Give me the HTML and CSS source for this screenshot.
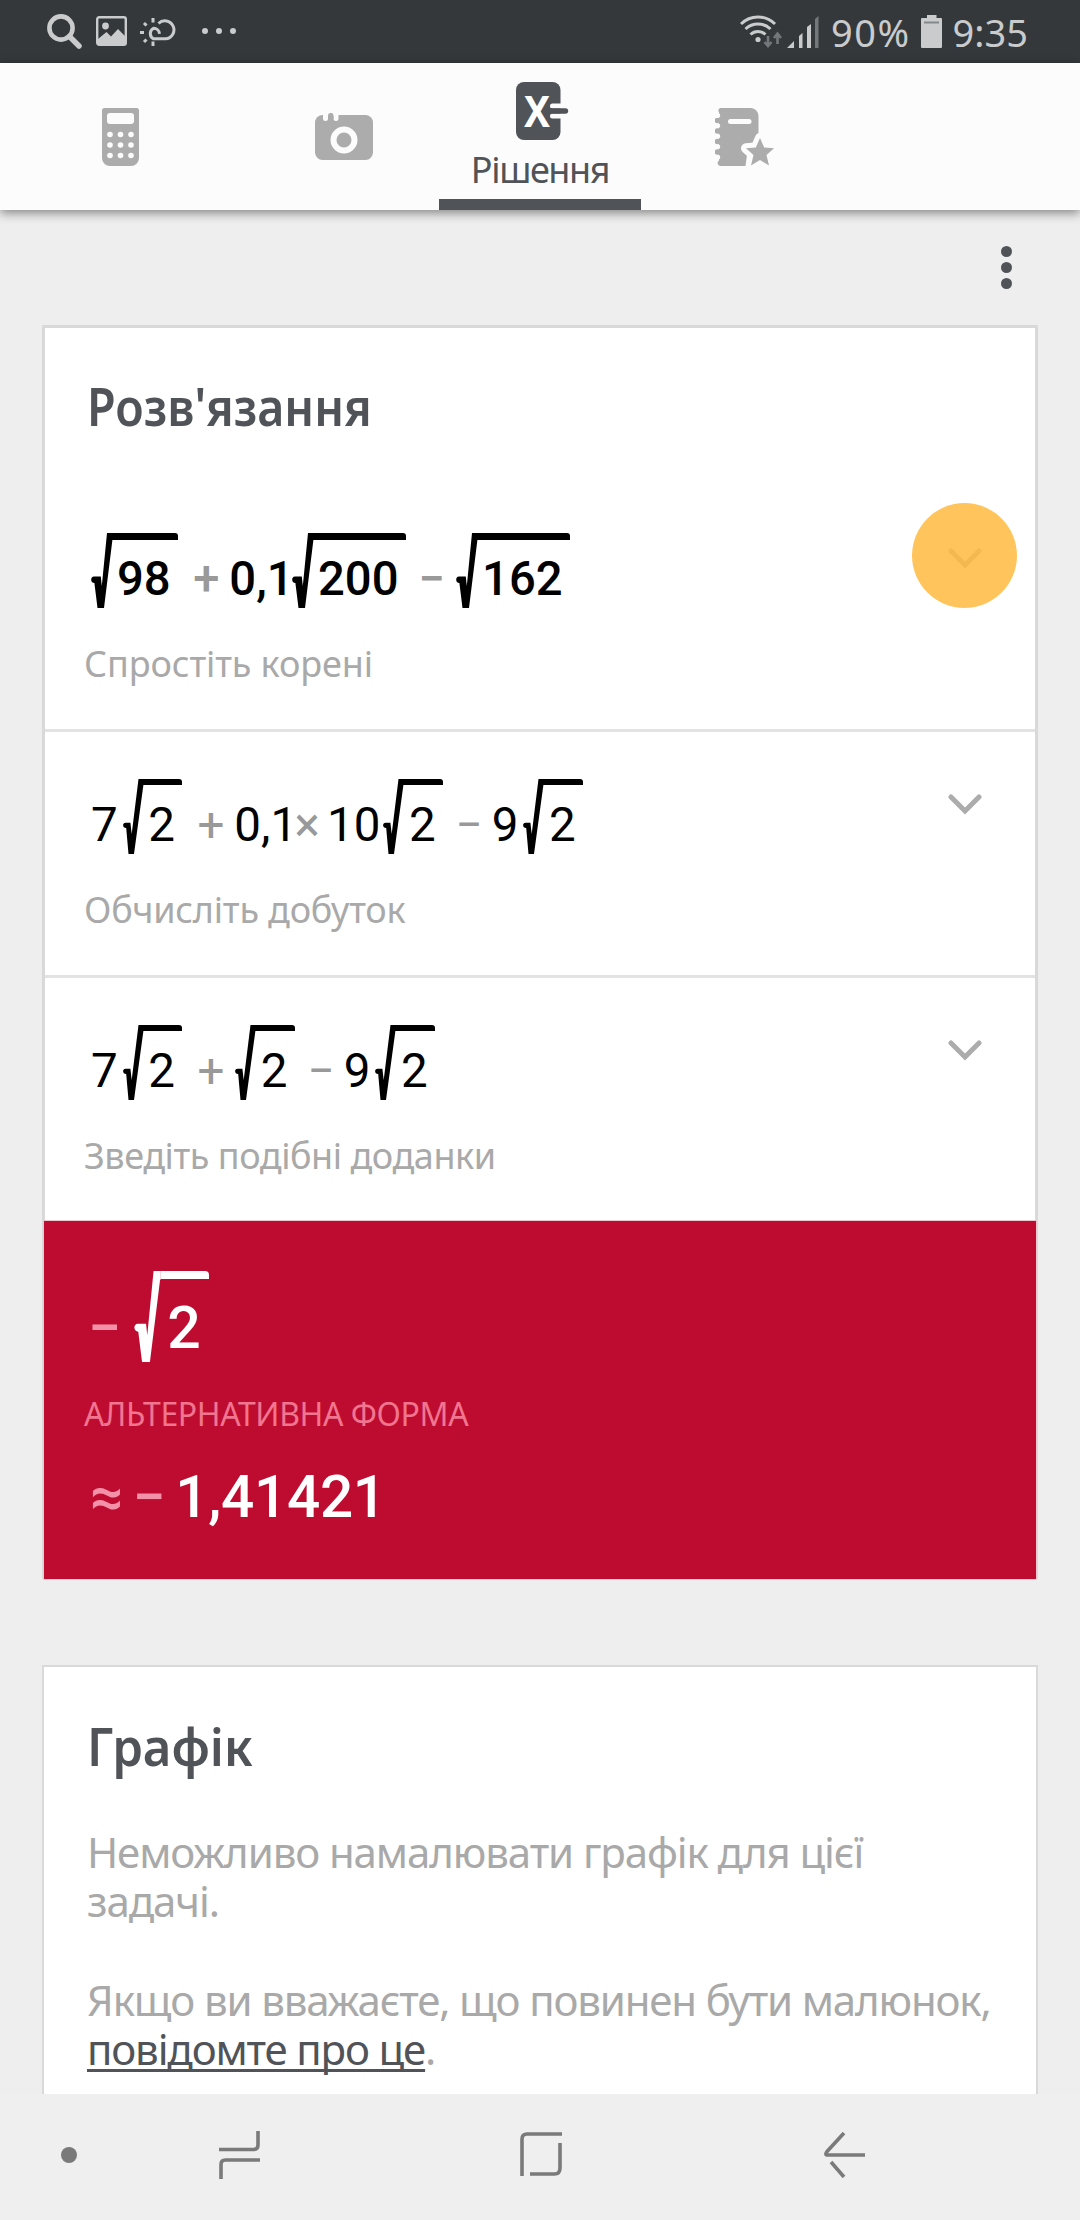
FILE: index.html
```html
<!DOCTYPE html>
<html lang="uk">
<head>
    <meta charset="UTF-8">
    <meta name="viewport" content="width=device-width, initial-scale=1.0">
    <title>Рішення</title>
    <link rel="stylesheet" href="styles.css">
</head>
<body>
    <!-- shared shapes -->
    <svg class="defs" width="0" height="0">
        <symbol id="tick" viewBox="0 0 22 75">
            <path d="M16 0H22V7H21.4L13 75H6.5L3.4 50C-.8 50-.8 43.5 3 43.5H9.8L10.8 53Z"/>
        </symbol>
        <symbol id="tick-thin" viewBox="0 0 21 75">
            <path d="M15.5 0H21V6H20.4L11 75H5.5L3.2 49C-.8 49-.8 43.8 2.6 43.8H7.4L8.7 55Z"/>
        </symbol>
        <symbol id="chevron" viewBox="0 0 34 21">
            <path d="M3 3L17 17L31 3" fill="none" stroke="currentColor" stroke-width="5" stroke-linecap="round"/>
        </symbol>
    </svg>

    <div class="screen">
        <div class="status-bar">
            <svg class="st-search" width="35" height="36" viewBox="0 0 35 36" fill="none" stroke="#c9cbcd">
                <circle cx="14" cy="14" r="11.6" stroke-width="4.6"/>
                <path d="M22.5 22.5L32 32" stroke-width="5.5" stroke-linecap="round"/>
            </svg>
            <svg class="st-image" width="31" height="30" viewBox="0 0 31 30">
                <rect x="1.2" y="1.2" width="28.6" height="27.6" rx="2" fill="none" stroke="#c9cbcd" stroke-width="2.4"/>
                <circle cx="9.5" cy="10" r="3.4" fill="#c9cbcd"/>
                <path d="M2 23L10.5 16L15 20.5L22 13L29 20V28H2Z" fill="#c9cbcd"/>
            </svg>
            <svg class="st-weather" width="36" height="28" viewBox="0 0 36 28" fill="none" stroke="#c9cbcd" stroke-width="3">
                <path d="M19.5 15.8A6 6 0 0 0 13.5 10.2A6 6 0 0 0 13.5 20.8H25.5A9 9 0 1 0 18.5 5.500"/>
                <path d="M13 0V4.500M13 23.500V28M0 14.500H4M4 5L6.500 7.500M4 24L6.500 21.500"/>
            </svg>
            <svg class="st-more" width="34" height="6" viewBox="0 0 34 6" fill="#c9cbcd">
                <circle cx="3" cy="3" r="3"/><circle cx="17" cy="3" r="3"/><circle cx="31" cy="3" r="3"/>
            </svg>
            <div class="status-right">
                <svg width="42" height="34" viewBox="0 0 42 34" fill="none">
                    <path d="M1 9A24 24 0 0 1 35 9M5.5 14A18 18 0 0 1 30.5 14M10.5 19.5A11 11 0 0 1 25.5 19.5" stroke="#c9cbcd" stroke-width="3"/>
                    <circle cx="18" cy="24.5" r="2.6" fill="#c9cbcd"/>
                    <path d="M28 21V30M24.5 27L28 31L31.5 27M37.5 29V19M34 23L37.5 18.5L41 23" stroke="#74787b" stroke-width="2.6"/>
                </svg>
                <svg class="st-signal" width="32" height="32" viewBox="0 0 32 32" fill="#c9cbcd">
                    <path d="M0 32L7 25V32ZM12 20L15.5 17V32H12ZM20 11L24 8V32H20Z"/>
                    <path d="M28 3L31.5 0V32H28Z" fill="#74787b"/>
                </svg>
                <span class="battery-text">90%</span>
                <svg class="st-battery" width="21" height="33" viewBox="0 0 21 33">
                    <path d="M6 0H15.5V3H20A1 1 0 0 1 21 4V32A1 1 0 0 1 20 33H1A1 1 0 0 1 0 32V4A1 1 0 0 1 1 3H6Z" fill="#c9cbcd"/>
                    <path d="M3 7.5H18" stroke="#84888b" stroke-width="2"/>
                </svg>
                <span class="clock">9:35</span>
            </div>
        </div>

        <div class="tabs">
            <div class="tab tab-calc">
                <svg width="37" height="58" viewBox="0 0 37 58">
                    <path d="M2.5 0H34.5A2.5 2.5 0 0 1 37 2.5V50A8 8 0 0 1 29 58H8A8 8 0 0 1 0 50V2.5A2.5 2.5 0 0 1 2.5 0Z" fill="#acacac"/>
                    <g fill="#fcfcfc">
                        <rect x="5" y="5" width="27" height="11" rx="3"/>
                        <circle cx="8" cy="26.5" r="2.8"/><circle cx="18.5" cy="26.5" r="2.8"/><circle cx="29" cy="26.5" r="2.8"/>
                        <circle cx="8" cy="37" r="2.8"/><circle cx="18.5" cy="37" r="2.8"/><circle cx="29" cy="37" r="2.8"/>
                        <circle cx="8" cy="47.5" r="2.8"/><circle cx="18.5" cy="47.5" r="2.8"/><circle cx="29" cy="47.5" r="2.8"/>
                    </g>
                </svg>
            </div>
            <div class="tab tab-camera">
                <svg width="58" height="47" viewBox="0 0 58 47">
                    <rect y="2" width="58" height="45" rx="7.5" fill="#acacac"/>
                    <path d="M8 0H13V5.5A2.5 2.5 0 0 1 8 5.5ZM18.5 0H23.5V5.5A2.5 2.5 0 0 1 18.5 5.5ZM13 0H18.5V3H13Z" fill="#fcfcfc"/>
                    <path d="M13 6V2.7A2.7 2.7 0 0 1 18.5 2.7V6Z" fill="#acacac"/>
                    <circle cx="29" cy="27" r="10.5" fill="none" stroke="#fcfcfc" stroke-width="6"/>
                </svg>
            </div>
            <div class="tab tab-solution">
                <svg width="53" height="58" viewBox="0 0 53 58">
                    <rect width="44.500" height="58" rx="8" fill="#505358"/>
                    <text class="x-mark" x="8" y="44.500" textLength="26" lengthAdjust="spacingAndGlyphs">X</text>
                    <path d="M36.500 24H46M36.500 34H46" stroke="#fcfcfc" stroke-width="5" stroke-linecap="round"/>
                    <path d="M30 29H49.500" stroke="#505358" stroke-width="5.400" stroke-linecap="round"/>
                </svg>
                <span class="tab-label">Рішення</span>
            </div>
            <div class="tab tab-notebook">
                <svg width="60" height="58" viewBox="0 0 60 58">
                    <path d="M5 0H36A8 8 0 0 1 43.500 8V29L34 40L32 47L30.500 58H5A3 3 0 0 1 4 52.500V4.500A3 3 0 0 1 5 0Z" fill="#acacac"/>
                    <path d="M2.500 12.500H8M2.500 23H8M2.500 33.500H8M2.500 44H8" stroke="#acacac" stroke-width="5.500" stroke-linecap="round"/>
                    <path d="M1 7.500H3M1 17.800H3M1 28.300H3M1 38.800H3M1 49.300H3" stroke="#fcfcfc" stroke-width="4.500" stroke-linecap="round"/>
                    <path d="M45 30L49.200 39.500L59 40.300L51.500 47L54 57.500L45 52L36 57.500L38.500 47L31 40.300L40.800 39.500Z" fill="#acacac" stroke="#fcfcfc" stroke-width="10" stroke-linejoin="round" paint-order="stroke"/>
                    <path d="M15.500 13.500H34" stroke="#fcfcfc" stroke-width="5" stroke-linecap="round"/>
                </svg>
            </div>
        </div>

        <div class="content">
            <div class="toolbar">
                <svg width="11" height="43" viewBox="0 0 11 43" fill="#505358">
                    <circle cx="5.5" cy="5.5" r="5.5"/><circle cx="5.5" cy="21.5" r="5.5"/><circle cx="5.5" cy="37.5" r="5.5"/>
                </svg>
            </div>

            <div class="card">
                <h2 class="card-title title-solve">Розв'язання</h2>

                <div class="step step-first">
                    <div class="step-body">
                        <div class="eq eq-bold">
                            <span class="root"><svg><use href="#tick"/></svg><span class="radicand">98</span></span>
                            <span class="op plus">+</span>
                            <span class="num">0,1</span>
                            <span class="root tight"><svg><use href="#tick"/></svg><span class="radicand">200</span></span>
                            <span class="op minus">−</span>
                            <span class="root after-op"><svg><use href="#tick"/></svg><span class="radicand">162</span></span>
                        </div>
                        <p class="hint hint-1">Спростіть корені</p>
                    </div>
                    <svg class="chevron"><use href="#chevron"/></svg>
                    <div class="tap"></div>
                </div>

                <div class="step">
                    <div class="step-body">
                        <div class="eq">
                            <span class="num lead">7</span>
                            <span class="root"><svg><use href="#tick-thin"/></svg><span class="radicand">2</span></span>
                            <span class="op plus">+</span>
                            <span class="num">0,1</span>
                            <span class="op times">×</span>
                            <span class="num ten">10</span>
                            <span class="root near"><svg><use href="#tick-thin"/></svg><span class="radicand">2</span></span>
                            <span class="op minus">−</span>
                            <span class="num nine">9</span>
                            <span class="root"><svg><use href="#tick-thin"/></svg><span class="radicand">2</span></span>
                        </div>
                        <p class="hint hint-2">Обчисліть добуток</p>
                    </div>
                    <svg class="chevron"><use href="#chevron"/></svg>
                </div>

                <div class="step step-last">
                    <div class="step-body">
                        <div class="eq">
                            <span class="num lead">7</span>
                            <span class="root"><svg><use href="#tick-thin"/></svg><span class="radicand">2</span></span>
                            <span class="op plus">+</span>
                            <span class="root after-op"><svg><use href="#tick-thin"/></svg><span class="radicand">2</span></span>
                            <span class="op minus">−</span>
                            <span class="num nine">9</span>
                            <span class="root"><svg><use href="#tick-thin"/></svg><span class="radicand">2</span></span>
                        </div>
                        <p class="hint hint-3">Зведіть подібні доданки</p>
                    </div>
                    <svg class="chevron"><use href="#chevron"/></svg>
                </div>

                <div class="result">
                    <div class="eq eq-result">
                        <span class="op">−</span>
                        <span class="root"><svg><use href="#tick"/></svg><span class="radicand">2</span></span>
                    </div>
                    <p class="alt-label">АЛЬТЕРНАТИВНА ФОРМА</p>
                    <div class="approx">
                        <span class="op about">≈</span>
                        <span class="op neg">−</span>
                        <span class="value">1,41421</span>
                    </div>
                </div>
            </div>

            <div class="card card-graph">
                <h2 class="card-title title-graph">Графік</h2>
                <p class="note">Неможливо намалювати графік для цієї задачі.</p>
                <p class="note note-report">Якщо ви вважаєте, що повинен бути малюнок, <a href="#">повідомте про це</a>.</p>
            </div>
        </div>

        <div class="nav-bar">
            <span class="nav-dot"></span>
            <svg class="nav-recents" width="41" height="48" viewBox="0 0 41 48">
                <path d="M39 0V14Q39 18.5 34.5 18.5H0M2 48V33.5Q2 29 6.5 29H41"/>
            </svg>
            <svg class="nav-home" width="42" height="45" viewBox="0 0 42 45">
                <path d="M2 44V7Q2 2 7 2H42M40 11V36Q40 42 34.5 42H10"/>
            </svg>
            <svg class="nav-back" width="41" height="46" viewBox="0 0 41 46">
                <path d="M20 1L3.5 19Q0 23 4 23H41M7 30L20 45"/>
            </svg>
        </div>
    </div>
</body>
</html>
```
FILE: styles.css
```css
* {
    box-sizing: border-box;
}

body {
    margin: 0;
    font-family: "Noto Sans", sans-serif;
    background: #eeeeee;
}

h2, p {
    margin: 0;
}

svg {
    display: block;
    flex: none;
}

.defs {
    position: absolute;
}

.screen {
    width: 1080px;
    height: 2220px;
    display: flex;
    flex-direction: column;
    overflow: hidden;
}

/* Status bar */
.status-bar {
    height: 63px;
    flex: none;
    display: flex;
    align-items: flex-start;
    background: #34383b;
    color: #c9cbcd;
    padding-left: 47px;
    padding-bottom: 2px;
}

.st-search {
    margin-top: 14px;
}

.st-image {
    margin: 16px 0 0 14px;
}

.st-weather {
    margin: 18px 0 0 13px;
}

.st-more {
    margin: 28px 0 0 26px;
}

.status-right {
    display: flex;
    margin: 15px 0 0 504px;
    font-size: 38px;
    line-height: 35px;
}

.st-signal {
    margin: 1px 0 0 5px;
}

.battery-text {
    margin-left: 12px;
    letter-spacing: 1.5px;
}

.st-battery {
    margin-left: 10px;
}

.clock {
    margin-left: 11px;
}

/* Tabs */
.tabs {
    height: 147px;
    flex: none;
    display: flex;
    background: #fcfcfc;
    box-shadow: 0 3px 10px rgba(0, 0, 0, 0.45);
}

.tab {
    display: flex;
    flex-direction: column;
    align-items: center;
}

.tab-calc {
    width: 241px;
    padding-top: 45px;
}

.tab-camera {
    width: 198px;
    padding: 50px 0 0 7px;
}

.tab-solution {
    width: 202px;
    padding-top: 19px;
    border-bottom: 11px solid #505358;
}

.tab-solution svg {
    margin-left: 5px;
}

.x-mark {
    font-family: "Noto Sans", sans-serif;
    font-size: 43.5px;
    font-weight: 700;
    fill: #fff;
}

.tab-label {
    color: #505358;
    font-size: 36px;
    line-height: 48px;
    letter-spacing: -1.4px;
    margin-top: 6px;
}

.tab-notebook {
    width: 208px;
    padding: 45px 1px 0 0;
}

/* Content */
.content {
    flex: 1;
    min-height: 0;
    padding: 0 42px;
}

.toolbar {
    height: 115px;
    display: flex;
    justify-content: flex-end;
    padding: 36px 26px 0 0;
}

.card {
    background: #fff;
    border: 3px solid #d9d9d9;
    border-bottom: 0;
}

.card-title {
    color: #505358;
    font-size: 52px;
    font-weight: 600;
    line-height: 70px;
    transform-origin: 42px 0;
}

.title-solve {
    height: 158px;
    padding: 43px 0 0 42px;
    transform: scaleX(0.896);
}

.step {
    display: flex;
    align-items: flex-start;
    position: relative;
    height: 246px;
    padding: 47px 53px 0 39px;
    border-bottom: 3px solid #e3e3e3;
}

.step-last {
    height: 243px;
    border-bottom: 0;
}

.step-body {
    flex: 1;
}

.chevron {
    width: 34px;
    height: 21px;
    margin-top: 15px;
    color: #acacac;
}

/* touch highlight over the first expand arrow */
.tap {
    position: absolute;
    top: 17px;
    right: 18px;
    width: 105px;
    height: 105px;
    border-radius: 50%;
    background: rgba(255, 187, 65, 0.86);
}

.hint {
    color: #a9a9a9;
    font-size: 36px;
    line-height: 46px;
    letter-spacing: -0.1px;
    margin-top: 33px;
}

.hint-2 {
    letter-spacing: -0.2px;
}

.hint-3 {
    letter-spacing: -0.45px;
}

/* Equations */
.eq {
    display: flex;
    align-items: flex-start;
    height: 75px;
    margin-left: 7px;
    font-family: Roboto, sans-serif;
    font-size: 47.5px;
    line-height: 92px;
    color: #000;
}

.eq-bold {
    font-size: 47.2px;
    font-weight: 500;
}

.root {
    display: flex;
    align-items: flex-start;
    margin-left: 5px;
}

.root svg {
    width: 21px;
    height: 75px;
    fill: currentColor;
}

.radicand {
    border-top: 6px solid currentColor;
    border-top-right-radius: 3px;
    line-height: 80px;
    padding: 0 7.5px 0 4.5px;
}

.eq-bold .root:first-child {
    margin-left: 0;
}

.eq-bold .root svg {
    width: 22px;
}

.eq-bold .radicand {
    border-top-width: 7px;
    line-height: 79px;
    padding: 0 7.5px 0 4px;
}

.op {
    color: #999;
}

.plus {
    margin-left: 15px;
}

.minus {
    margin-left: 12.5px;
}

.times {
    margin-left: -2.5px;
}

.num {
    margin-left: 10px;
}

.num.lead {
    margin-left: 0;
}

.num.ten {
    margin-left: 7px;
}

.num.nine {
    margin-left: 9px;
}

.root.near {
    margin-left: 3px;
}

.root.tight {
    margin-left: -1.5px;
}

.root.after-op {
    margin-left: 11px;
}

/* Result */
.result {
    height: 358px;
    margin: 0 -1px;
    padding: 50px 0 0 40px;
    background: #be0c31;
    box-shadow: 0 0 0 1px #f0c8cf;
    color: #fff;
}

.eq-result {
    height: 91px;
    margin-left: 4px;
    font-size: 59px;
    font-weight: 500;
    line-height: 114px;
    color: #fff;
}

.eq-result .root {
    margin-left: 13px;
}

.eq-result .root svg {
    width: 27px;
    height: 91px;
}

.eq-result .radicand {
    border-top-width: 8px;
    border-top-right-radius: 4px;
    line-height: 98px;
    padding: 0 8.5px 0 6px;
}

.result .op {
    color: #f391a8;
}

.alt-label {
    margin-top: 32px;
    color: #f0758f;
    font-size: 32px;
    line-height: 40px;
    letter-spacing: -0.4px;
}

.approx {
    display: flex;
    margin: 23px 0 0 6px;
    font-family: Roboto, sans-serif;
    font-size: 58.5px;
    font-weight: 500;
    line-height: 80px;
}

.neg {
    margin-left: 9px;
}

.value {
    margin-left: 10px;
    letter-spacing: -0.3px;
}

/* Graph card */
.card-graph {
    margin-top: 86px;
    height: 429px;
    border-width: 2px;
    border-bottom: 0;
    padding: 44px 0 0 43px;
}

.title-graph {
    transform: scaleX(0.944);
    transform-origin: 0 0;
}

.note {
    width: 910px;
    margin-top: 46px;
    color: #a9a9a9;
    font-size: 42px;
    line-height: 49px;
    letter-spacing: -1.1px;
}

.note-report {
    margin-top: 50px;
    letter-spacing: -1.15px;
}

.note a {
    color: #505358;
    text-decoration: underline;
    text-decoration-thickness: 3px;
    text-underline-offset: 4px;
    text-decoration-skip-ink: none;
}

/* System navigation */
.nav-bar {
    height: 126px;
    flex: none;
    display: flex;
    align-items: center;
    padding: 0 0 5px 61px;
    background: #efefef;
}

.nav-bar svg {
    fill: none;
    stroke: #7a7a7a;
    stroke-width: 3.6;
}

.nav-dot {
    width: 16px;
    height: 16px;
    border-radius: 50%;
    background: #7a7a7a;
}

.nav-recents {
    margin-left: 142px;
}

.nav-home {
    margin-left: 260px;
}

.nav-back {
    margin-left: 262px;
}
```
